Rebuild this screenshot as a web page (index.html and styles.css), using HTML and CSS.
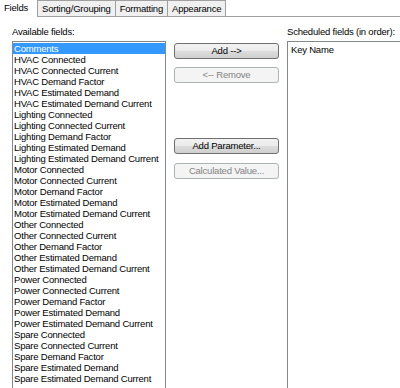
FILE: index.html
```html
<!DOCTYPE html>
<html>
<head>
<meta charset="utf-8">
<link rel="stylesheet" href="styles.css">
</head>
<body>
<div class="page">
  <div class="tabs">
    <div class="tab active">Fields</div>
    <div class="tab">Sorting/Grouping</div>
    <div class="tab">Formatting</div>
    <div class="tab">Appearance</div>
    <div class="tab-fill"></div>
  </div>
  <div class="content">
    <div class="col left">
      <div class="label">Available fields:</div>
      <div class="list">
        <div class="item selected">Comments</div>
        <div class="item">HVAC Connected</div>
        <div class="item">HVAC Connected Current</div>
        <div class="item">HVAC Demand Factor</div>
        <div class="item">HVAC Estimated Demand</div>
        <div class="item">HVAC Estimated Demand Current</div>
        <div class="item">Lighting Connected</div>
        <div class="item">Lighting Connected Current</div>
        <div class="item">Lighting Demand Factor</div>
        <div class="item">Lighting Estimated Demand</div>
        <div class="item">Lighting Estimated Demand Current</div>
        <div class="item">Motor Connected</div>
        <div class="item">Motor Connected Current</div>
        <div class="item">Motor Demand Factor</div>
        <div class="item">Motor Estimated Demand</div>
        <div class="item">Motor Estimated Demand Current</div>
        <div class="item">Other Connected</div>
        <div class="item">Other Connected Current</div>
        <div class="item">Other Demand Factor</div>
        <div class="item">Other Estimated Demand</div>
        <div class="item">Other Estimated Demand Current</div>
        <div class="item">Power Connected</div>
        <div class="item">Power Connected Current</div>
        <div class="item">Power Demand Factor</div>
        <div class="item">Power Estimated Demand</div>
        <div class="item">Power Estimated Demand Current</div>
        <div class="item">Spare Connected</div>
        <div class="item">Spare Connected Current</div>
        <div class="item">Spare Demand Factor</div>
        <div class="item">Spare Estimated Demand</div>
        <div class="item">Spare Estimated Demand Current</div>
      </div>
    </div>
    <div class="buttons">
      <div class="btn-group">
        <button class="btn">Add --&gt;</button>
        <button class="btn disabled">&lt;-- Remove</button>
      </div>
      <div class="btn-group second">
        <button class="btn">Add Parameter...</button>
        <button class="btn disabled">Calculated Value...</button>
      </div>
    </div>
    <div class="col right">
      <div class="label">Scheduled fields (in order):</div>
      <div class="list">
        <div class="item">Key Name</div>
      </div>
    </div>
  </div>
</div>
</body>
</html>
```

FILE: styles.css
```css
html, body {
  margin: 0;
  padding: 0;
  background: #ffffff;
}
body {
  width: 400px;
  height: 388px;
  overflow: hidden;
  font-family: "Liberation Sans", Arial, sans-serif;
  font-size: 9.5px;
  letter-spacing: -0.2px;
  color: #000;
}
.page {
  width: 400px;
  height: 400px;
  display: flex;
  flex-direction: column;
}
.tabs {
  display: flex;
  align-items: flex-end;
  height: 17px;
  flex: none;
}
.tab {
  height: 15px;
  line-height: 15px;
  padding: 0 4px;
  border: 1px solid #a0a0a0;
  border-left: none;
  background: #f0f0f0;
  color: #000;
  white-space: nowrap;
}
.tab:nth-child(2) {
  border-left: 1px solid #a0a0a0;
}
.tab.active {
  background: #fff;
  border: none;
  width: 29px;
  padding: 0 4px;
  height: 17px;
  line-height: 15px;
}
.tab-fill {
  flex: 1;
  border-bottom: 1px solid #a0a0a0;
  height: 0;
}
.content {
  flex: 1;
  display: flex;
  padding: 9px 0 0 12px;
  min-height: 0;
}
.col {
  display: flex;
  flex-direction: column;
  min-height: 0;
}
.left {
  width: 154px;
  flex: none;
}
.right {
  flex: none;
  width: 140px;
}
.label {
  height: 15px;
  line-height: 12px;
  white-space: nowrap;
}
.list {
  flex: 1;
  border: 1px solid #828790;
  background: #fff;
  padding: 1px 0 0 0;
  overflow: hidden;
}
.item {
  height: 11px;
  line-height: 11px;
  padding-left: 1px;
  white-space: nowrap;
  color: #000;
}
.item.selected {
  background: #3399ff;
  color: #fff;
}
.right .list {
  border-right: none;
}
.right .item {
  padding-left: 3px;
  line-height: 13px;
  height: 13px;
}
.buttons {
  flex: none;
  width: 105px;
  margin: 0 8px;
  padding-top: 17px;
  display: flex;
  flex-direction: column;
  gap: 55px;
}
.btn-group {
  display: flex;
  flex-direction: column;
  gap: 8px;
}
.btn-group.second {
  gap: 9px;
}
.btn {
  height: 16px;
  width: 105px;
  padding: 0;
  margin: 0;
  font: inherit;
  letter-spacing: inherit;
  border: 1px solid #707070;
  border-radius: 3px;
  background: linear-gradient(#f2f2f2 0%, #ebebeb 50%, #dddddd 51%, #cfcfcf 100%);
  color: #000;
  line-height: 14px;
  text-align: center;
}
.btn.disabled {
  border-color: #adb2b5;
  background: #f4f4f4;
  color: #838383;
}
```
